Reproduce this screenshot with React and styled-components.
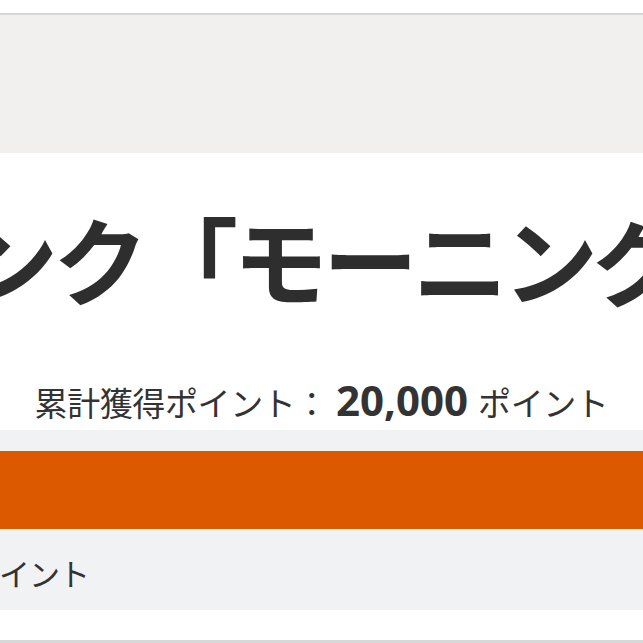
import React from 'react';
import styled, { createGlobalStyle } from 'styled-components';

const GlobalStyle = createGlobalStyle`
  html, body {
    margin: 0;
    padding: 0;
    background: #ffffff;
  }
  body {
    font-family: "Noto Sans CJK JP", "Noto Sans", sans-serif;
    color: #333333;
  }
`;

const Page = styled.div`
  display: flex;
  flex-direction: column;
  width: 100%;
  overflow: hidden;
`;

/* thin white strip with the grey rule under it */
const TopStrip = styled.div`
  height: 13px;
  background: #ffffff;
  border-bottom: 2px solid #d6d6d6;
`;

const HeaderBand = styled.div`
  height: 138px;
  background: #f1f0ee;
`;

const Card = styled.section`
  display: flex;
  flex-direction: column;
  height: 277px;
  background: #ffffff;
`;

const TitleRow = styled.div`
  overflow: hidden;
  white-space: nowrap;
  margin-top: 50px;
`;

const Title = styled.h1`
  margin: 0 0 0 -217px;
  font-size: 95px;
  line-height: 110px;
  font-weight: 700;
  letter-spacing: -5px;
  color: #2e2e2e;
`;

const PointsRow = styled.div`
  display: flex;
  justify-content: center;
  align-items: baseline;
  margin-top: 65px;
  font-size: 33px;
  line-height: 44px;
  color: #333333;
  letter-spacing: -0.4px;
  white-space: nowrap;
`;

const Amount = styled.span`
  font-family: "Noto Sans", "Noto Sans CJK JP", sans-serif;
  font-weight: 700;
  font-size: 42px;
  letter-spacing: 0;
  margin: 0 10px 0 8px;
`;

const Gap = styled.div`
  height: ${(p) => p.h}px;
  background: ${(p) => p.bg};
`;

const OrangeBar = styled.div`
  height: 78px;
  background: #dc5900;
`;

const SubRow = styled.div`
  height: 81px;
  background: #f1f2f4;
  display: flex;
  align-items: center;
  overflow: hidden;
  white-space: nowrap;
`;

const SubLabel = styled.span`
  margin: 6px 0 0 -31px;
  font-size: 31px;
  letter-spacing: -1px;
  color: #333333;
`;

const BottomStrip = styled.div`
  height: 30px;
  background: #ffffff;
  border-bottom: 3px solid #d8d8d8;
`;

export default function App() {
  return (
    <>
      <GlobalStyle />
      <Page>
        <TopStrip />
        <HeaderBand />
        <Card>
          <TitleRow>
            <Title>ドリンク「モーニング」</Title>
          </TitleRow>
          <PointsRow>
            累計獲得ポイント：<Amount>20,000</Amount>ポイント
          </PointsRow>
        </Card>
        <Gap h={21} bg="#f1f2f4" />
        <OrangeBar />
        <SubRow>
          <SubLabel>ポイント</SubLabel>
        </SubRow>
        <BottomStrip />
      </Page>
    </>
  );
}
